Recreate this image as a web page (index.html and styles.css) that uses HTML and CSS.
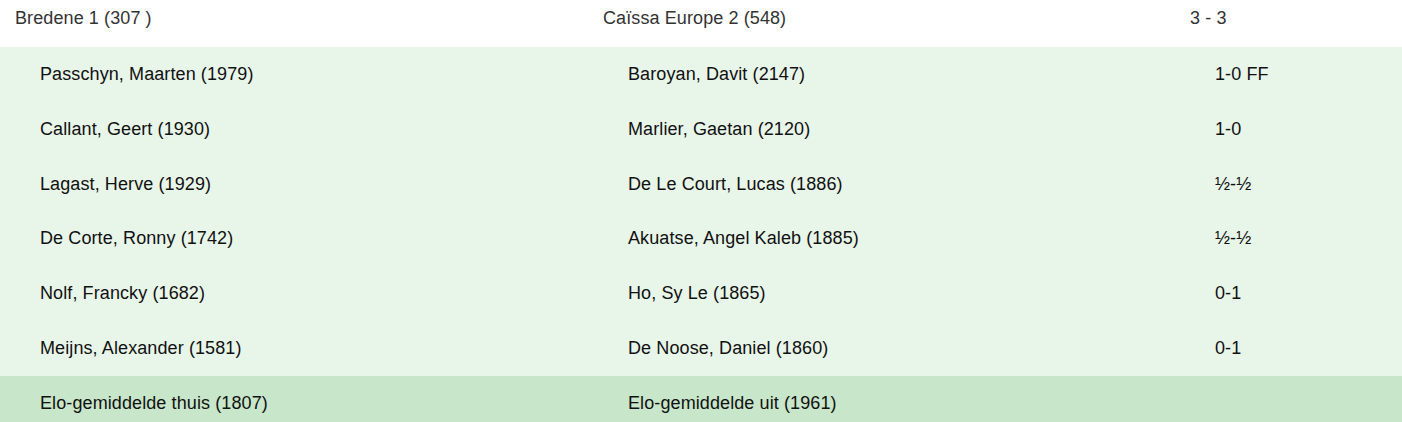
FILE: index.html
```html
<!DOCTYPE html>
<html>
<head>
<meta charset="utf-8">
<link rel="stylesheet" href="styles.css">
</head>
<body>
<div class="match">
  <div class="row head">
    <div class="cell">Bredene 1 (307 )</div>
    <div class="cell">Caïssa Europe 2 (548)</div>
    <div class="cell">3 - 3</div>
  </div>
  <div class="row game">
    <div class="cell">Passchyn, Maarten (1979)</div>
    <div class="cell">Baroyan, Davit (2147)</div>
    <div class="cell">1-0 FF</div>
  </div>
  <div class="row game">
    <div class="cell">Callant, Geert (1930)</div>
    <div class="cell">Marlier, Gaetan (2120)</div>
    <div class="cell">1-0</div>
  </div>
  <div class="row game">
    <div class="cell">Lagast, Herve (1929)</div>
    <div class="cell">De Le Court, Lucas (1886)</div>
    <div class="cell">½-½</div>
  </div>
  <div class="row game">
    <div class="cell">De Corte, Ronny (1742)</div>
    <div class="cell">Akuatse, Angel Kaleb (1885)</div>
    <div class="cell">½-½</div>
  </div>
  <div class="row game">
    <div class="cell">Nolf, Francky (1682)</div>
    <div class="cell">Ho, Sy Le (1865)</div>
    <div class="cell">0-1</div>
  </div>
  <div class="row game">
    <div class="cell">Meijns, Alexander (1581)</div>
    <div class="cell">De Noose, Daniel (1860)</div>
    <div class="cell">0-1</div>
  </div>
  <div class="row avg">
    <div class="cell">Elo-gemiddelde thuis (1807)</div>
    <div class="cell">Elo-gemiddelde uit (1961)</div>
    <div class="cell"></div>
  </div>
</div>
</body>
</html>
```
FILE: styles.css
```css
html, body {
  margin: 0;
  padding: 0;
  background: #ffffff;
}
body {
  font-family: "Liberation Sans", Arial, sans-serif;
  font-size: 18px;
  letter-spacing: 0.1px;
  color: #111;
}
.match {
  display: flex;
  flex-direction: column;
}
.row {
  display: grid;
  grid-template-columns: 588px 587px 1fr;
}
.head {
  height: 47px;
  box-sizing: border-box;
  padding-top: 8px;
  line-height: 20px;
  color: #333;
  background: #ffffff;
}
.head .cell {
  padding-left: 15px;
}
.game, .avg {
  line-height: 20.83px;
  padding: 17px 0;
}
.game .cell, .avg .cell {
  padding-left: 40px;
}
.game {
  background: #e8f5e9;
}
.avg {
  background: #c8e6c9;
}
```
